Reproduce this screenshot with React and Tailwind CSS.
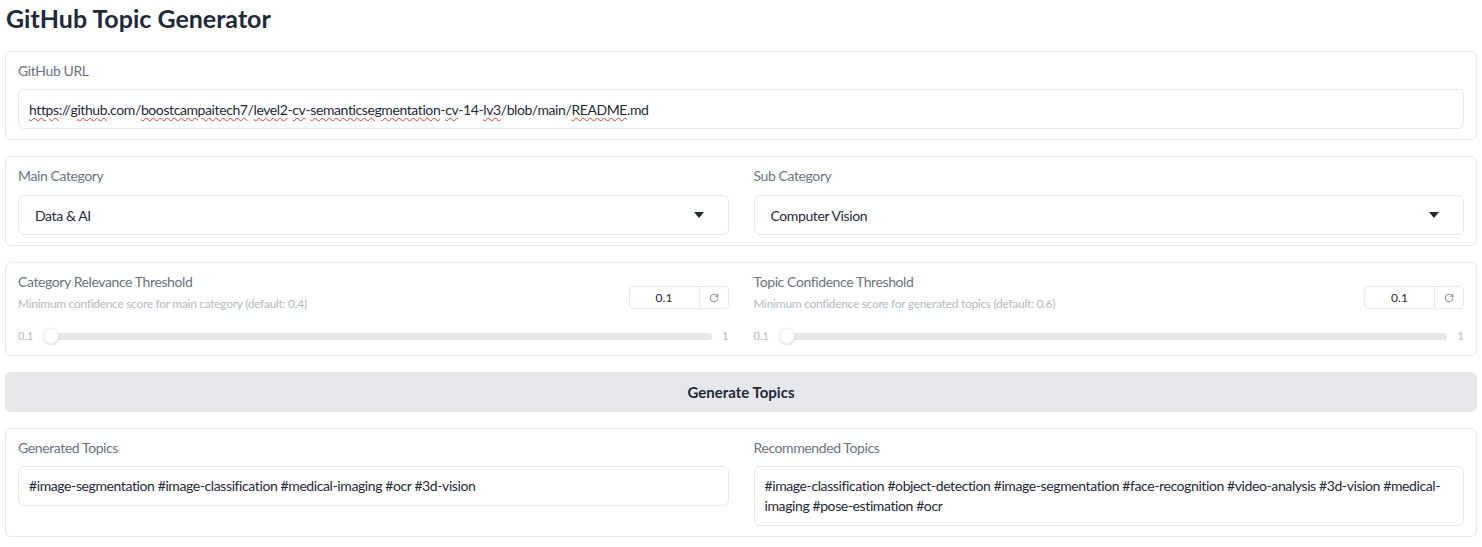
import { RotateCcw } from 'lucide-react';

const font = { fontFamily: 'Lato, "Noto Sans", sans-serif' };

// url pieces, flagged ones get the spellcheck squiggle
const urlParts = [
  ['https', true], ['://', false], ['github', true], ['.com/', false],
  ['boostcampaitech7', true], ['/', false], ['level2', true], ['-', false],
  ['cv', true], ['-', false], ['semanticsegmentation', true], ['-', false],
  ['cv', true], ['-14-', false], ['lv3', true], ['/blob/main/', false],
  ['README', true], ['.md', false],
];

function Label({ children }) {
  return <div className="text-[14px] leading-[18px] tracking-[-0.4px] text-[#6b7280]">{children}</div>;
}

function Dropdown({ label, value }) {
  return (
    <div className="flex flex-col gap-[10px]">
      <Label>{label}</Label>
      <div className="h-10 flex items-center justify-between pl-4 pr-6 border border-[#e5e7eb] rounded-md bg-white">
        <span className="text-[14px] tracking-[-0.4px] text-[#1f2937]">{value}</span>
        <svg width="10" height="6" viewBox="0 0 10 6" className="text-[#1f2937]">
          <path d="M0 0h10L5 6z" fill="currentColor" />
        </svg>
      </div>
    </div>
  );
}

function SliderField({ label, info }) {
  return (
    <div className="flex flex-col">
      <div className="flex items-start justify-between">
        <div className="flex flex-col">
          <Label>{label}</Label>
          <div className="text-[12px] leading-4 mt-[5px] tracking-[-0.3px] text-[#b5b9c0]">{info}</div>
        </div>
        <div className="flex mt-[13px] h-[23px] border border-[#e5e7eb] rounded-[4px] bg-white">
          <div className="w-[70px] flex items-center justify-center text-[12px] text-[#1f2937] border-r border-[#e5e7eb]">0.1</div>
          <div className="w-[28px] flex items-center justify-center text-[#6b7280]">
            <RotateCcw size={10} strokeWidth={2} className="scale-x-[-1]" />
          </div>
        </div>
      </div>
      <div className="flex items-center mt-[16px] h-4">
        <span className="text-[11px] text-[#b5b9c0] w-[26px]">0.1</span>
        <div className="relative flex-1 h-[7px] rounded-full bg-[#e5e7eb]">
          <div className="absolute left-[-1px] top-1/2 -translate-y-1/2 w-4 h-4 rounded-full bg-white border border-[#eeeeee] shadow-sm" />
        </div>
        <span className="text-[11px] text-[#b5b9c0] w-[17px] text-right">1</span>
      </div>
    </div>
  );
}

function TopicBox({ label, text }) {
  return (
    <div className="flex flex-col gap-[9px]">
      <Label>{label}</Label>
      <div className="min-h-10 px-[10px] py-[9px] border border-[#e5e7eb] rounded-md bg-white text-[14px] leading-5 tracking-[-0.4px] text-[#1f2937]">
        {text}
      </div>
    </div>
  );
}

export default function App() {
  return (
    <div className="min-h-screen bg-white px-[5px] pt-[2px] pb-4" style={font}>
      <h1 className="text-[25px] leading-8 font-bold text-[#1f2937] pl-[1px] mb-[17px]">GitHub Topic Generator</h1>

      <div className="flex flex-col gap-[16px]">
        <div className="border border-[#e5e7eb] rounded-md px-3 py-[10px] flex flex-col gap-[9px]">
          <Label>GitHub URL</Label>
          <div className="h-10 flex items-center px-[10px] border border-[#e5e7eb] rounded-md text-[14px] tracking-[-0.4px] text-[#1f2937] whitespace-nowrap">
            {urlParts.map(([t, bad], i) => (
              <span key={i} className={bad ? 'underline decoration-wavy decoration-[#e53935] decoration-1 underline-offset-2' : ''}>{t}</span>
            ))}
          </div>
        </div>

        <div className="border border-[#e5e7eb] rounded-md px-3 pt-[10px] pb-[10px] grid grid-cols-2 gap-[25px]">
          <Dropdown label="Main Category" value="Data & AI" />
          <Dropdown label="Sub Category" value="Computer Vision" />
        </div>

        <div className="border border-[#e5e7eb] rounded-md px-3 pt-[10px] pb-[11px] grid grid-cols-2 gap-[25px]">
          <SliderField label="Category Relevance Threshold" info="Minimum confidence score for main category (default: 0.4)" />
          <SliderField label="Topic Confidence Threshold" info="Minimum confidence score for generated topics (default: 0.6)" />
        </div>

        <button className="h-10 w-full rounded-md bg-[#e5e7eb] text-[15px] font-bold text-[#1f2937]">Generate Topics</button>

        <div className="border border-[#e5e7eb] rounded-md px-3 py-[10px] grid grid-cols-2 gap-[25px] items-start">
          <TopicBox label="Generated Topics" text="#image-segmentation #image-classification #medical-imaging #ocr #3d-vision" />
          <TopicBox label="Recommended Topics" text="#image-classification #object-detection #image-segmentation #face-recognition #video-analysis #3d-vision #medical-imaging #pose-estimation #ocr" />
        </div>
      </div>
    </div>
  );
}
